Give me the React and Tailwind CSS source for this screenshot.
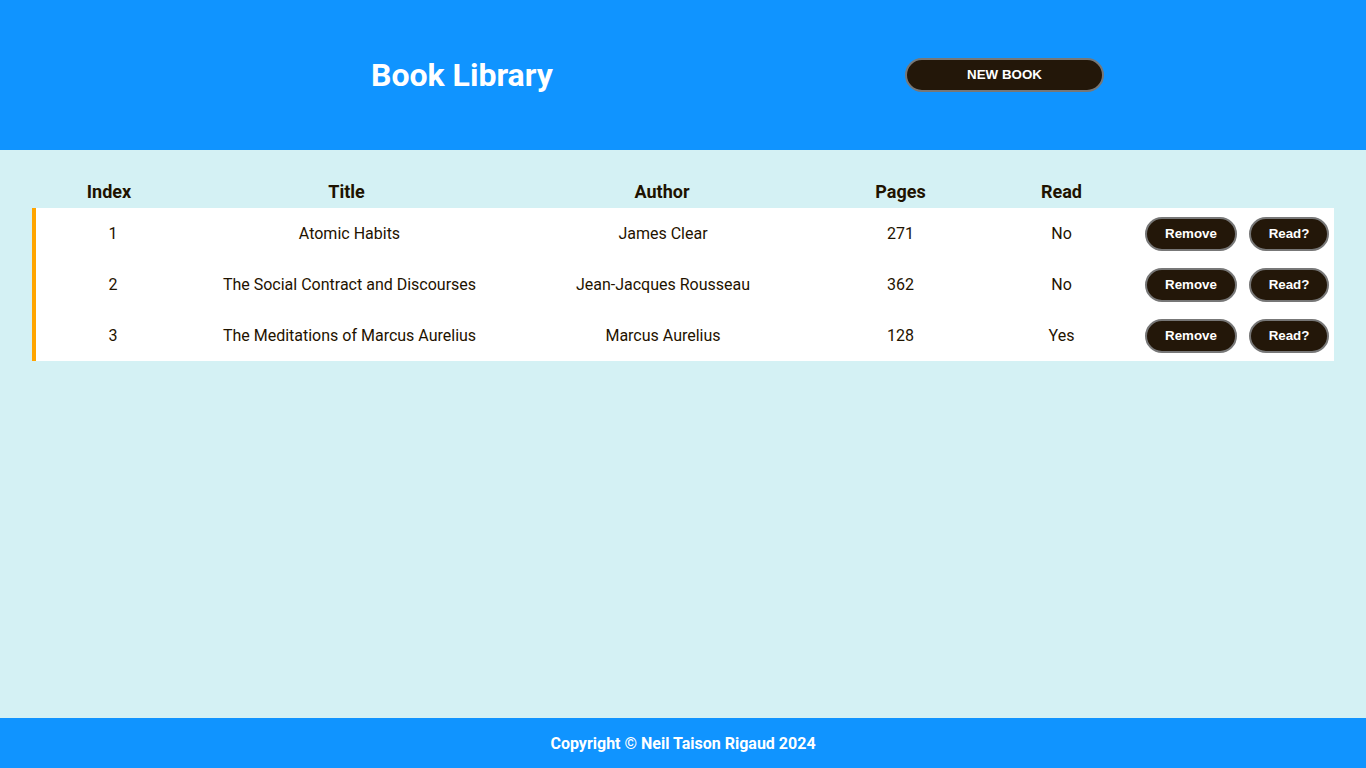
export default function App() {
  const books = [
    { i: 1, title: "Atomic Habits", author: "James Clear", pages: 271, read: "No" },
    { i: 2, title: "The Social Contract and Discourses", author: "Jean-Jacques Rousseau", pages: 362, read: "No" },
    { i: 3, title: "The Meditations of Marcus Aurelius", author: "Marcus Aurelius", pages: 128, read: "Yes" },
  ];
  const btn =
    "h-[34px] rounded-full border-2 border-[#777] bg-[#231709] text-white text-[13.333px] font-bold font-['Liberation_Sans',Arial,sans-serif] flex items-center justify-center";
  return (
    <div className="min-h-[768px] flex flex-col bg-[#d4f1f4] font-['Roboto',sans-serif] text-[#1f1300]">
      <header className="h-[150px] bg-[#1094ff] flex items-center">
        <h1 className="ml-[371px] w-[182px] text-[32px] leading-[1.2] font-bold text-white whitespace-nowrap">Book Library</h1>
        <button className={btn + " ml-[352px] w-[199px]"}>NEW BOOK</button>
      </header>
      <main className="flex-1 px-[32px] pt-[25px]">
        <div className="grid grid-cols-[156px_323px_304px_171px_151px_197px] h-[33px] items-center text-[18px] font-bold text-center">
          <div className="pr-[2px]">Index</div>
          <div className="pr-[6px]">Title</div>
          <div className="pr-[2px]">Author</div>
          <div>Pages</div>
          <div>Read</div>
          <div></div>
        </div>
        {books.map((b) => (
          <div
            key={b.i}
            className="grid grid-cols-[152px_323px_304px_171px_151px_197px] h-[51px] items-center bg-white border-l-4 border-[#ffa500] text-[16px] text-center"
          >
            <div className="pl-[2px]">{b.i}</div>
            <div>{b.title}</div>
            <div>{b.author}</div>
            <div>{b.pages}</div>
            <div>{b.read}</div>
            <div className="flex items-center gap-[12px] pl-[8px]">
              <button className={btn + " w-[92px]"}>Remove</button>
              <button className={btn + " w-[80px]"}>Read?</button>
            </div>
          </div>
        ))}
      </main>
      <footer className="h-[50px] bg-[#1094ff] flex items-center justify-center text-white font-bold text-[16px] pt-[1px]">
        Copyright © Neil Taison Rigaud 2024
      </footer>
    </div>
  );
}
